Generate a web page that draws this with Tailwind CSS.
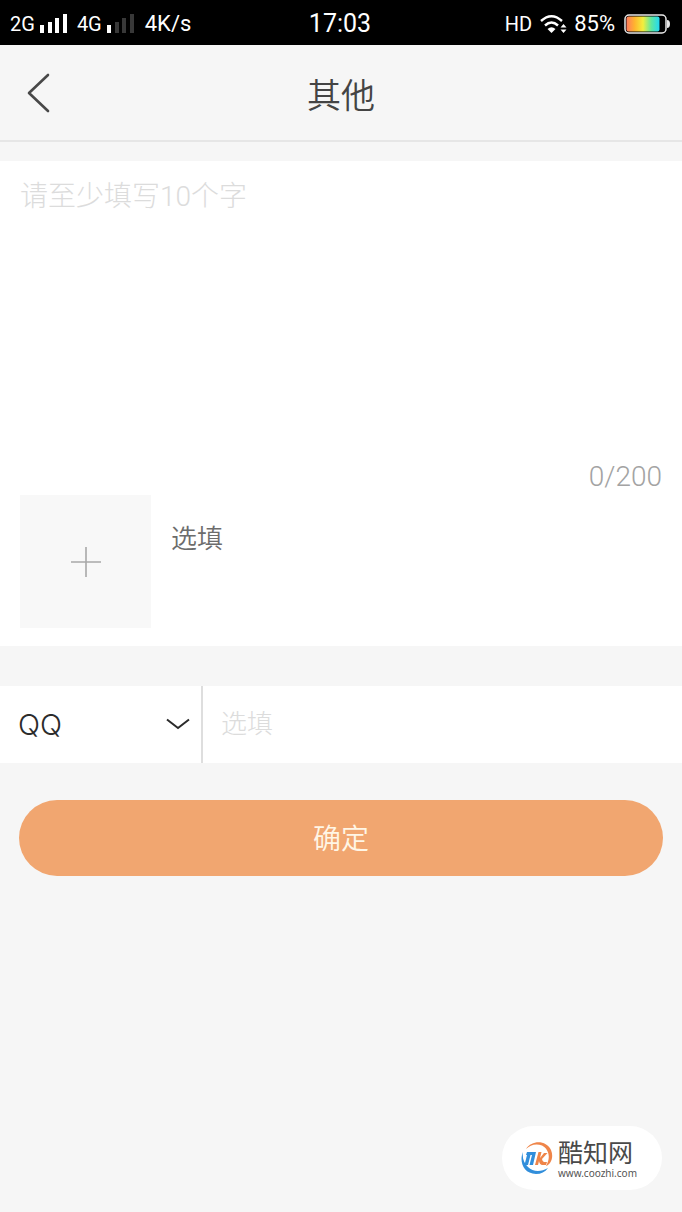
<!DOCTYPE html>
<html lang="zh-CN">
<head>
  <meta charset="UTF-8">
  <meta name="viewport" content="width=device-width, initial-scale=1">
  <title>其他</title>
  <script src="https://cdn.jsdelivr.net/npm/@tailwindcss/browser@4"></script>
</head>
<body class="relative min-h-screen bg-[#f6f6f6] font-['Roboto','Noto_Sans_CJK_SC',sans-serif] font-light">

  <!-- Status bar -->
  <div class="grid grid-cols-[1fr_auto_1fr] items-center h-[45px] pt-[2px] pl-[10px] pr-3 bg-black text-white font-normal">
    <div class="flex items-center">
      <span class="text-[20px]">2G</span>
      <svg class="ml-[5px] w-7 h-5" viewBox="0 0 28 20" fill="#fff">
        <rect x="0" y="11" width="4" height="8"/><rect x="8" y="8" width="4" height="11"/><rect x="15" y="4" width="4" height="15"/><rect x="23" y="0" width="4" height="19"/>
      </svg>
      <span class="ml-[9px] text-[20px]">4G</span>
      <svg class="ml-[5px] w-7 h-5" viewBox="0 0 28 20" fill="#383838">
        <rect x="0" y="11" width="4" height="8" fill="#fff"/><rect x="8" y="8" width="4" height="11"/><rect x="15" y="4" width="4" height="15"/><rect x="23" y="0" width="4" height="19"/>
      </svg>
      <span class="ml-[10px] text-[22px]">4K/s</span>
    </div>
    <span class="text-[25px]">17:03</span>
    <div class="flex items-center justify-end">
      <span class="text-[20px]">HD</span>
      <svg class="ml-2 w-7 h-5" viewBox="0 0 28 20" fill="none" stroke="#fff" stroke-width="2.4">
        <path d="M1 7Q11.500 -2.500 22 7M5 11.500Q11.500 5.500 18 11.500"/>
        <path d="M7.500 15Q11.500 11.500 15.500 15L11.500 19Z" fill="#fff" stroke="none"/>
        <path d="M20.500 13.500L23.500 10L26.500 13.500ZM20.500 15.500L23.500 19L26.500 15.500Z" fill="#fff" stroke="none"/>
      </svg>
      <span class="ml-[6px] text-[22px]">85%</span>
      <svg class="ml-[9px] w-[46px] h-5" viewBox="0 0 46 20">
        <defs>
          <linearGradient id="charge">
            <stop offset="0" stop-color="#ff7a5c"/><stop offset=".25" stop-color="#ffb52e"/><stop offset=".5" stop-color="#f3ee3c"/><stop offset=".75" stop-color="#5ee8a0"/><stop offset="1" stop-color="#22d8f4"/>
          </linearGradient>
        </defs>
        <rect x="1" y="1" width="41" height="18" rx="4" fill="none" stroke="#e8e8e8" stroke-width="1.500"/>
        <rect x="2.500" y="2.500" width="33" height="15" rx="2" fill="url(#charge)"/>
        <path d="M43 6Q46 6 46 10T43 14Z" fill="#e8e8e8"/>
      </svg>
    </div>
  </div>

  <header class="grid grid-cols-[1fr_auto_1fr] items-center h-[97px] border-b-2 border-[#e6e6e6]">
    <a href="#" aria-label="返回" class="pl-[26px]">
      <svg class="w-6 h-10" viewBox="0 0 24 40" fill="none" stroke="#484848" stroke-width="2.600" stroke-linecap="round" stroke-linejoin="round">
        <path d="M22 2L3 20L22 38"/>
      </svg>
    </a>
    <h1 class="pt-[6px] text-[34px] leading-10 font-[350] text-[#444]">其他</h1>
  </header>

  <form>
    <section class="mt-[19px] px-5 pt-[18px] pb-[18px] bg-white">
      <textarea aria-label="反馈内容" maxlength="200" placeholder="请至少填写10个字" class="block w-full h-[280px] resize-none outline-none text-[28px] leading-9 placeholder:text-[#dcdcdc]"></textarea>
      <p class="text-right text-[28px] leading-9 text-[#a3a3a3]">0/200</p>
      <div class="flex gap-5">
        <label class="flex items-center justify-center w-[131px] h-[133px] bg-[#f8f8f8]">
          <input type="file" accept="image/*" aria-label="添加图片" class="sr-only">
          <svg class="w-8 h-8" viewBox="0 0 32 32" stroke="#a8a8a8" stroke-width="1.600">
            <path d="M1 16H31M16 1V31"/>
          </svg>
        </label>
        <span class="pt-[26px] text-[26px] leading-9 font-[350] text-[#6c6c6c]">选填</span>
      </div>
    </section>

    <section class="mt-10 flex h-[77px] bg-white">
      <div class="relative w-[203px] shrink-0 border-r-2 border-[#dedede]">
        <select aria-label="联系方式" class="w-full h-full pl-[18px] appearance-none outline-none font-['Inter','Noto_Sans_CJK_SC',sans-serif] text-[29px] text-[#2b2b2b]">
          <option>QQ</option>
          <option>微信</option>
          <option>手机</option>
        </select>
        <svg class="absolute right-[11px] top-8 w-6 h-3 pointer-events-none" viewBox="0 0 24 12" fill="none" stroke="#2b2b2b" stroke-width="2">
          <path d="M1 1.500L12 10L23 1.500"/>
        </svg>
      </div>
      <input type="text" aria-label="联系号码" placeholder="选填" class="flex-1 min-w-0 px-[18px] pb-px outline-none text-[26px] placeholder:text-[#dcdcdc]">
    </section>

    <div class="mt-[37px] px-[19px]">
      <button type="submit" class="block w-full h-19 pt-1 rounded-full bg-[#f1a670] text-[28px] text-[#fff6e6] font-[350]">确定</button>
    </div>
  </form>

  <!-- Site badge -->
  <a href="#" class="absolute right-5 bottom-[22px] flex items-center gap-1 w-[160px] h-16 pl-[18px] rounded-full bg-white">
    <svg class="w-[34px] h-[34px] shrink-0" viewBox="0 0 34 34" fill="none">
      <path d="M6 8C12 -1 26 -1 31 9C34 16 31 23 26 25C31 17 29 8 22 4.500C16 2 10 4 6 8Z" fill="#ef8549"/>
      <path d="M3 11C-1 20 3 33 16 33C21 33 25 31 28 27C21 31 13 31 8 26C4 22 2 17 3 11Z" fill="#318edb"/>
      <path d="M7 11H16L13 24H9.500L12 14H10.500L8 24H4.500L7 14H6Z" fill="#318edb"/>
      <path d="M18.500 11H21.500L20 17L24 12H27.500L22 18Q22.500 21 24 21H27L26 24H22Q19.500 23.500 19 20L18 24H15Z" fill="#ef8549"/>
    </svg>
    <span class="flex flex-col pt-px">
      <span class="text-[25px] leading-7 font-normal text-[#4a4a4a]">酷知网</span>
      <span class="font-['Noto_Sans',sans-serif] text-[10px] leading-[10px] font-normal text-[#555]">www.coozhi.com</span>
    </span>
  </a>
</body>
</html>
